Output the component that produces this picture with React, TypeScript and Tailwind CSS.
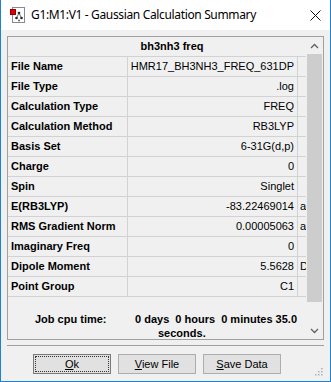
import React from "react";

const rows: [string, string, string][] = [
  ["File Name", "HMR17_BH3NH3_FREQ_631DP", ""],
  ["File Type", ".log", ""],
  ["Calculation Type", "FREQ", ""],
  ["Calculation Method", "RB3LYP", ""],
  ["Basis Set", "6-31G(d,p)", ""],
  ["Charge", "0", ""],
  ["Spin", "Singlet", ""],
  ["E(RB3LYP)", "-83.22469014", "a.u."],
  ["RMS Gradient Norm", "0.00005063", "a.u."],
  ["Imaginary Freq", "0", ""],
  ["Dipole Moment", "5.5628", "Debye"],
  ["Point Group", "C1", ""],
];

const font = { fontFamily: '"Liberation Sans", Arial, sans-serif' };

function Row({ label, value, unit }: { label: string; value: string; unit: string }) {
  return (
    <div className="flex h-[20px] border-b border-[#d2d2d2] text-[11px] leading-[19px] text-black">
      <div className="w-[120px] shrink-0 border-r border-[#d2d2d2] pl-[3px] font-bold whitespace-nowrap overflow-hidden">
        {label}
      </div>
      <div className="w-[170px] shrink-0 border-r border-[#d2d2d2] pr-[3px] text-right whitespace-nowrap overflow-hidden">
        {value}
      </div>
      <div className="w-[38px] shrink-0 pl-[2px] whitespace-nowrap overflow-hidden">{unit}</div>
    </div>
  );
}

function Btn({ children, focused }: { children: React.ReactNode; focused?: boolean }) {
  return (
    <div
      className={
        "relative w-[78px] h-[20px] bg-[#e1e1e1] border flex items-center justify-center text-[11px] text-black " +
        (focused ? "border-[#7a7a7a]" : "border-[#adadad]")
      }
    >
      {focused && <div className="absolute inset-[1px] border border-dotted border-[#333]" />}
      <span>{children}</span>
    </div>
  );
}

export default function App() {
  return (
    <div
      className="w-[331px] h-[382px] bg-white border-l border-r border-b border-[#1883d7] flex flex-col overflow-hidden"
      style={font}
    >
      {/* Title bar */}
      <div className="h-[30px] shrink-0 bg-white flex items-center relative">
        <svg className="ml-[9px] w-[16px] h-[16px]" viewBox="0 0 16 16">
          <rect x="2.5" y="0.5" width="12" height="15" fill="#fff" stroke="#8a8a8a" />
          <rect x="0" y="2" width="6" height="6" fill="#e00000" />
          <rect x="0.5" y="2.5" width="5" height="5" fill="none" stroke="#600" strokeWidth="0.6" />
          <circle cx="9" cy="6" r="1.3" fill="#222" />
          <circle cx="6.5" cy="11" r="1.3" fill="#222" />
          <circle cx="11.5" cy="11" r="1.3" fill="#222" />
          <line x1="9" y1="6" x2="6.5" y2="11" stroke="#444" strokeWidth="0.8" />
          <line x1="9" y1="6" x2="11.5" y2="11" stroke="#444" strokeWidth="0.8" />
          <circle cx="9" cy="13.5" r="0.9" fill="#555" />
        </svg>
        <span
          className="ml-[5px] text-[12px] text-black whitespace-nowrap"
          style={{ fontFamily: '"Noto Sans", "Open Sans", sans-serif', letterSpacing: "-0.35px" }}
        >
          G1:M1:V1 - Gaussian Calculation Summary
        </span>
        <svg className="absolute left-[309px] top-[10px] w-[11px] h-[11px]" viewBox="0 0 11 11">
          <path d="M0.5 0.5 L10.5 10.5 M10.5 0.5 L0.5 10.5" stroke="#111" strokeWidth="1" />
        </svg>
      </div>

      {/* Client */}
      <div className="flex-1 bg-[#f0f0f0] flex flex-col pt-[6px] px-[6px] relative">
        {/* Panel */}
        <div className="h-[304px] border border-[#a0a0a0] flex">
          <div className="w-[298px] overflow-hidden flex flex-col">
            <div className="w-[328px]">
              <div className="h-[20px] border-b border-[#d2d2d2] text-[11px] leading-[19px] font-bold text-center text-black">
                bh3nh3 freq
              </div>
              {rows.map(([l, v, u]) => (
                <Row key={l} label={l} value={v} unit={u} />
              ))}
              <div className="h-[42px] flex text-[11px] font-bold text-black leading-[14px]">
                <div className="w-[120px] shrink-0 pt-[15px] pl-[27px] whitespace-nowrap">Job cpu time:</div>
                <div className="pt-[15px] pl-[7px] whitespace-nowrap">
                  <div>0 days&nbsp; 0 hours&nbsp; 0 minutes 35.0</div>
                  <div className="pl-[23px]">seconds.</div>
                </div>
              </div>
            </div>
          </div>
          {/* Scrollbar */}
          <div className="w-[17px] shrink-0 bg-[#f0f0f0] flex flex-col">
            <div className="h-[17px] flex items-center justify-center">
              <svg width="9" height="6" viewBox="0 0 9 6">
                <path d="M1 5 L4.5 1.5 L8 5" stroke="#606060" strokeWidth="1.3" fill="none" />
              </svg>
            </div>
            <div className="flex-1 flex flex-col">
              <div className="mx-[1px] h-[248px] bg-[#cdcdcd]" />
            </div>
            <div className="h-[17px] flex items-center justify-center">
              <svg width="9" height="6" viewBox="0 0 9 6">
                <path d="M1 1 L4.5 4.5 L8 1" stroke="#606060" strokeWidth="1.3" fill="none" />
              </svg>
            </div>
          </div>
        </div>

        {/* Separator */}
        <div className="mt-[5px] h-[1px] bg-[#a0a0a0]" />

        {/* Buttons */}
        <div className="mt-[8px] flex gap-[7px] pl-[26px]">
          <Btn focused>
            <span className="underline">O</span>k
          </Btn>
          <Btn>
            <span className="underline">V</span>iew File
          </Btn>
          <Btn>
            <span className="underline">S</span>ave Data
          </Btn>
        </div>

        {/* Grip */}
        <svg className="absolute right-[7px] bottom-[5px]" width="10" height="10" viewBox="0 0 10 10">
          {[
            [8, 2],
            [5, 5],
            [8, 5],
            [2, 8],
            [5, 8],
            [8, 8],
          ].map(([x, y], i) => (
            <rect key={i} x={x} y={y} width="1.5" height="1.5" fill="#b0b0b0" />
          ))}
        </svg>
      </div>
    </div>
  );
}
